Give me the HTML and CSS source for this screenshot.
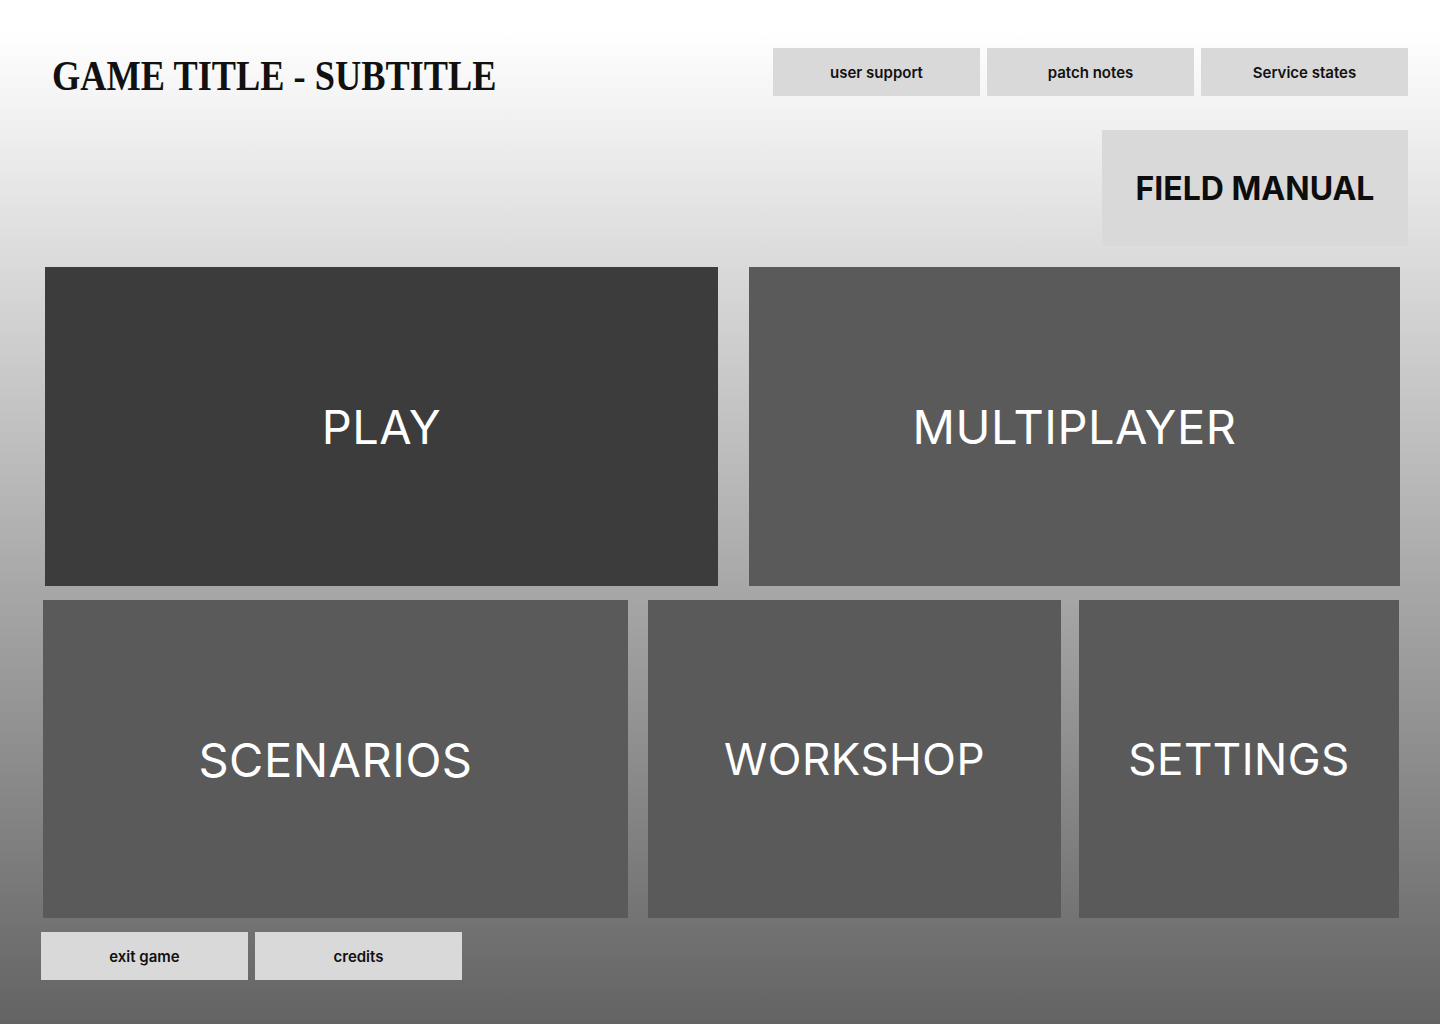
FILE: index.html
```html
<!DOCTYPE html>
<html lang="en">

<head>
    <meta http-equiv="Content-Type" content="text/html; charset=UTF-8" />
    <meta name="viewport" content="width=device-width, initial-scale=1.0">
    <title>Game Title - Main Menu</title>
    <link rel="stylesheet" href="styles.css">
</head>

<body>
    <div class="menu-screen">
        <header class="top-bar">
            <h1 class="game-title"><span class="title-text">GAME TITLE - SUBTITLE</span></h1>
            <nav class="info-links">
                <a class="small-btn" href="#">user support</a>
                <a class="small-btn" href="#">patch notes</a>
                <a class="small-btn" href="#">Service states</a>
            </nav>
        </header>

        <div class="manual-row">
            <a class="manual-btn" href="#">FIELD MANUAL</a>
        </div>

        <div class="tile-row first-row">
            <a class="tile tile-play" href="#">PLAY</a>
            <a class="tile tile-multi" href="#">MULTIPLAYER</a>
        </div>

        <div class="tile-row second-row">
            <a class="tile tile-scenarios" href="#">SCENARIOS</a>
            <a class="tile tile-workshop" href="#">WORKSHOP</a>
            <a class="tile tile-settings" href="#">SETTINGS</a>
        </div>

        <footer class="bottom-bar">
            <a class="small-btn" href="#">exit game</a>
            <a class="small-btn" href="#">credits</a>
        </footer>
    </div>
</body>

</html>
```

FILE: styles.css
```css
html,
body {
    margin: 0;
    padding: 0;
}

body {
    width: 1440px;
    height: 1024px;
    overflow: hidden;
    font-family: Inter, 'Noto Sans', sans-serif;
    background: linear-gradient(to bottom, #ffffff 0px, #ffffff 30px, #636363 1024px);
}

a {
    text-decoration: none;
}

.menu-screen {
    display: flex;
    flex-direction: column;
}

.top-bar {
    display: flex;
    justify-content: space-between;
    align-items: flex-start;
    padding: 48px 32px 0 52px;
}

.game-title {
    margin: 8px 0 0 0;
    font-family: 'Liberation Serif', serif;
    font-weight: bold;
    font-size: 43px;
    line-height: 40px;
    color: #111111;
}

/* the original face is a narrow display serif */
.title-text {
    display: inline-block;
    transform: scaleX(0.845);
    transform-origin: left center;
}

.info-links {
    display: flex;
    gap: 7px;
}

.small-btn {
    display: flex;
    align-items: center;
    justify-content: center;
    width: 207px;
    height: 48px;
    background-color: #d9d9d9;
    color: #111111;
    font-size: 15px;
    font-weight: 600;
}

.manual-row {
    display: flex;
    justify-content: flex-end;
    padding: 34px 32px 0 0;
}

.manual-btn {
    display: flex;
    align-items: center;
    justify-content: center;
    width: 306px;
    height: 116px;
    background-color: #d9d9d9;
    color: #0d0d0d;
    font-size: 32px;
    font-weight: 700;
}

.tile-row {
    display: flex;
}

.first-row {
    margin-top: 21px;
    padding-left: 45px;
    gap: 31px;
}

.second-row {
    margin-top: 14px;
    padding-left: 43px;
}

.tile {
    display: flex;
    align-items: center;
    justify-content: center;
    height: 319px;
    background-color: #5a5a5a;
    color: #ffffff;
    font-size: 47px;
    font-weight: 400;
    letter-spacing: 0.5px;
}

.tile-play {
    width: 673px;
    background-color: #3c3c3c;
}

.tile-multi {
    width: 651px;
}

.second-row .tile {
    height: 318px;
}

.tile-scenarios {
    width: 585px;
}

.tile-workshop {
    width: 413px;
    margin-left: 20px;
    font-size: 44px;
}

.tile-settings {
    width: 320px;
    margin-left: 18px;
    font-size: 44px;
}

.bottom-bar {
    display: flex;
    gap: 7px;
    margin-top: 14px;
    padding-left: 41px;
}
```
